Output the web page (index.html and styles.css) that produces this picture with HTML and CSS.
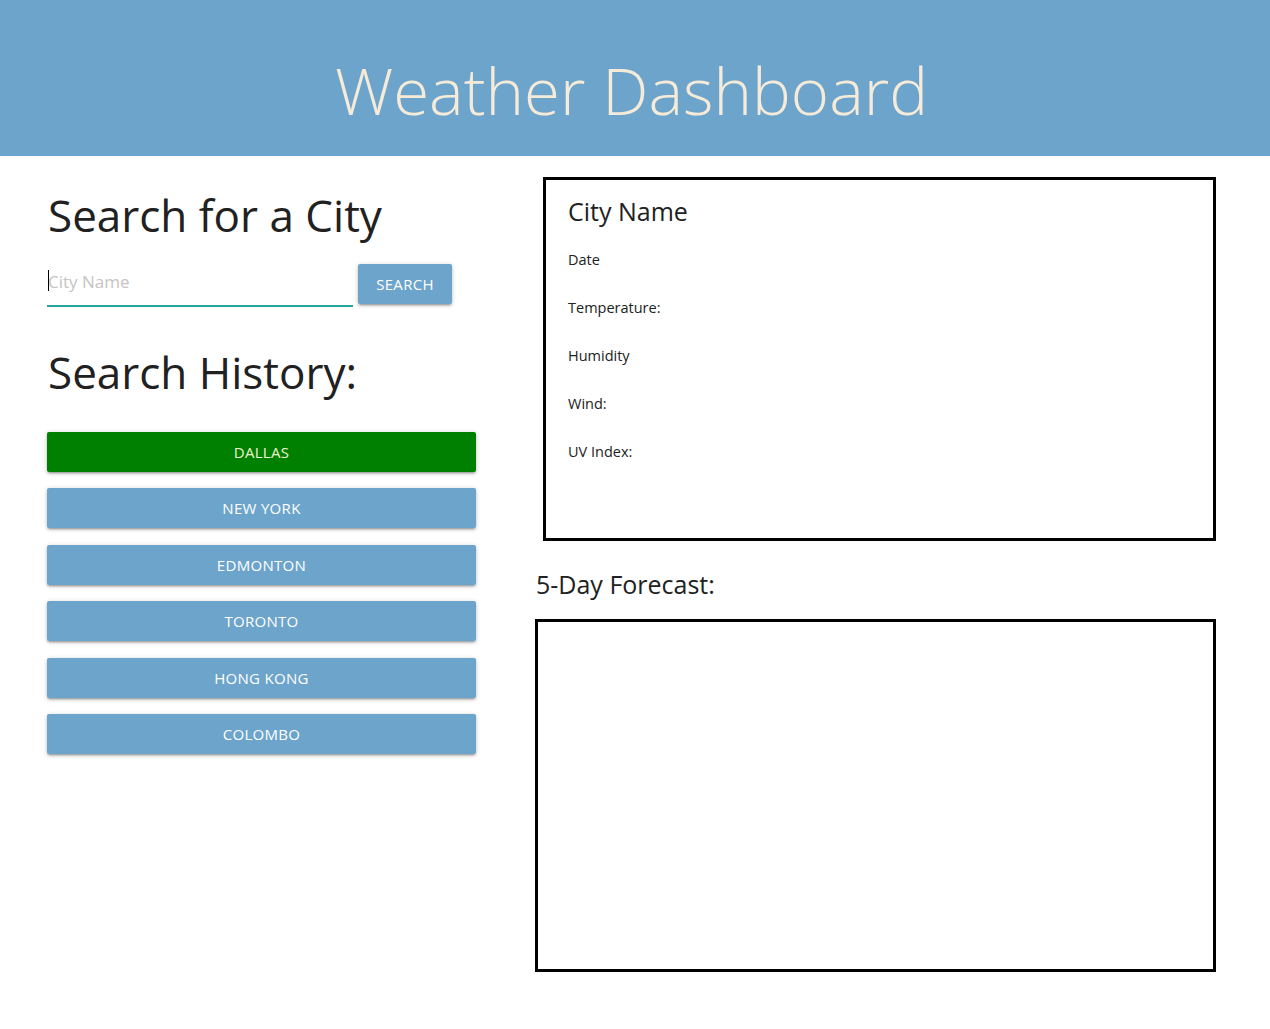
FILE: index.html
```html
<!DOCTYPE html>
<html lang="en">
<head>
<meta charset="utf-8">
<title>Weather Dashboard</title>
<link rel="stylesheet" href="styles.css">
</head>
<body>
<header class="top">
  <h1 class="top__title">Weather Dashboard</h1>
</header>
<main class="page">
  <section class="side">
    <h2 class="side__heading">Search for a City</h2>
    <div class="search">
      <div class="search__field">
        <input class="search__input" type="text" placeholder="City Name">
        <span class="search__caret"></span>
      </div>
      <button class="btn search__btn">Search</button>
    </div>
    <h2 class="side__heading side__heading--history">Search History:</h2>
    <div class="history">
      <button class="btn history__btn history__btn--active">Dallas</button>
      <button class="btn history__btn">New York</button>
      <button class="btn history__btn">Edmonton</button>
      <button class="btn history__btn">Toronto</button>
      <button class="btn history__btn">Hong Kong</button>
      <button class="btn history__btn">Colombo</button>
    </div>
  </section>
  <section class="content">
    <div class="current">
      <h3 class="current__city">City Name</h3>
      <p class="current__line">Date</p>
      <p class="current__line">Temperature:</p>
      <p class="current__line">Humidity</p>
      <p class="current__line">Wind:</p>
      <p class="current__line">UV Index:</p>
    </div>
    <h3 class="forecast__title">5-Day Forecast:</h3>
    <div class="forecast"></div>
  </section>
</main>
</body>
</html>
```
FILE: styles.css
```css
* { box-sizing: border-box; }
html, body { margin: 0; padding: 0; }
body {
  font-family: "Open Sans", "Noto Sans", sans-serif;
  color: #212121;
  background: #fff;
  width: 1270px;
}
.top {
  height: 156px;
  background: #6ca4cb;
  display: flex;
  align-items: center;
  justify-content: center;
}
.top__title {
  margin: 0 7px 0 0;
  padding-top: 24px;
  font-size: 65.3px;
  font-weight: 300;
  color: #f6ebd9;
  line-height: 1;
}
.page {
  display: flex;
  padding-left: 47px;
}
.side {
  width: 429px;
  padding-top: 29px;
}
.side__heading {
  margin: 0;
  font-size: 44px;
  font-weight: 400;
  line-height: 60px;
  padding-left: 1px;
}
.side__heading--history {
  margin-top: 35px;
}
.search {
  display: flex;
  align-items: flex-start;
  margin-top: 20px;
}
.search__field {
  position: relative;
  width: 306px;
}
.search__input {
  display: block;
  width: 100%;
  height: 42px;
  border: none;
  border-bottom: 2px solid #26a69a;
  outline: none;
  padding: 0 0 8px 1px;
  font-family: inherit;
  font-size: 17px;
  color: #212121;
  background: transparent;
}
.search__input::placeholder { color: #c4c4c4; }
.search__caret {
  position: absolute;
  left: 1px;
  top: 5px;
  width: 1px;
  height: 21px;
  background: #000;
}
.btn {
  border: none;
  height: 40px;
  background: #6ca4cb;
  color: #fff;
  font-family: inherit;
  font-size: 15px;
  text-transform: uppercase;
  letter-spacing: 0.3px;
  border-radius: 2px;
  box-shadow: 0 2px 2px 0 rgba(0,0,0,.14), 0 3px 1px -2px rgba(0,0,0,.12), 0 1px 5px 0 rgba(0,0,0,.2);
  cursor: pointer;
}
.search__btn {
  width: 94px;
  margin-left: 5px;
  margin-top: -1px;
}
.history {
  display: flex;
  flex-direction: column;
  gap: 16.4px;
  margin-top: 30px;
}
.history__btn { width: 429px; }
.history__btn--active {
  background: #008000;
  color: #eef4cf;
}
.content {
  margin-left: 59px;
  width: 681px;
  padding-top: 21px;
}
.current {
  margin-left: 8px;
  height: 364px;
  border: 3px solid #000;
  padding: 14px 22px;
}
.current__city {
  margin: 0 0 8px;
  font-size: 25px;
  font-weight: 400;
  line-height: 34px;
}
.current__line {
  margin: 0;
  font-size: 14.5px;
  line-height: 48px;
}
.forecast__title {
  margin: 26px 0 0 1px;
  font-size: 25px;
  font-weight: 400;
  line-height: 34px;
}
.forecast {
  margin-top: 18px;
  height: 353px;
  border: 3px solid #000;
}
```
